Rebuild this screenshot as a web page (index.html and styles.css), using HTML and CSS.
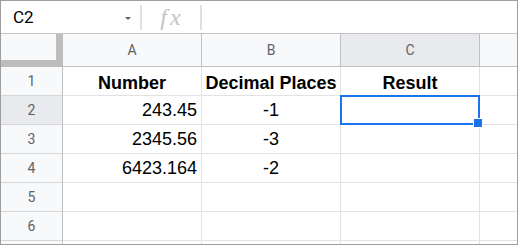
FILE: index.html
```html
<!DOCTYPE html>
<html>
<head>
<meta charset="utf-8">
<link rel="stylesheet" href="styles.css">
</head>
<body>
<div class="frame">
  <div class="formula-bar">
    <div class="name-box">
      <span class="name">C2</span>
      <span class="caret"></span>
    </div>
    <div class="sep"></div>
    <div class="fx">fx</div>
    <div class="sep"></div>
    <div class="formula-input"></div>
  </div>
  <div class="grid">
    <div class="corner"></div>
    <div class="colhead">A</div>
    <div class="colhead">B</div>
    <div class="colhead sel">C</div>
    <div class="colhead last"></div>

    <div class="rowhead">1</div>
    <div class="cell bold center r1">Number</div>
    <div class="cell bold center r1">Decimal Places</div>
    <div class="cell bold center r1">Result</div>
    <div class="cell last"></div>

    <div class="rowhead sel">2</div>
    <div class="cell right">243.45</div>
    <div class="cell center">-1</div>
    <div class="cell active"><div class="selection"></div><div class="handle"></div></div>
    <div class="cell last"></div>

    <div class="rowhead">3</div>
    <div class="cell right">2345.56</div>
    <div class="cell center">-3</div>
    <div class="cell"></div>
    <div class="cell last"></div>

    <div class="rowhead">4</div>
    <div class="cell right">6423.164</div>
    <div class="cell center">-2</div>
    <div class="cell"></div>
    <div class="cell last"></div>

    <div class="rowhead">5</div>
    <div class="cell"></div>
    <div class="cell"></div>
    <div class="cell"></div>
    <div class="cell last"></div>

    <div class="rowhead">6</div>
    <div class="cell"></div>
    <div class="cell"></div>
    <div class="cell"></div>
    <div class="cell last"></div>

    <div class="rowhead partial"></div>
    <div class="cell partial"></div>
    <div class="cell partial"></div>
    <div class="cell partial"></div>
    <div class="cell partial last"></div>
  </div>
</div>
</body>
</html>
```
FILE: styles.css
```css
* { box-sizing: border-box; }
html, body { margin: 0; padding: 0; background: #fff; }
.frame {
  width: 518px;
  height: 245px;
  border: 1px solid #9e9e9e;
  display: flex;
  flex-direction: column;
  overflow: hidden;
}
.formula-bar {
  height: 33px;
  flex: none;
  display: flex;
  align-items: center;
  border-bottom: 1px solid #c4c4c4;
}
.name-box {
  width: 139px;
  height: 32px;
  display: flex;
  align-items: center;
  padding-left: 12px;
}
.name {
  font-family: Roboto, "Liberation Sans", sans-serif;
  font-size: 17px;
  color: #000;
  flex: 1;
}
.caret {
  width: 0;
  height: 0;
  border-left: 3px solid transparent;
  border-right: 3px solid transparent;
  border-top: 3px solid #5f6368;
  margin-right: 9px;
  margin-top: 2px;
}
.sep {
  width: 2px;
  height: 25px;
  background: #e0e0e0;
  flex: none;
}
.fx {
  width: 58px;
  text-align: center;
  font-family: "Liberation Serif", serif;
  font-style: italic;
  font-size: 24px;
  letter-spacing: 3px;
  color: #c4c4c4;
  line-height: 32px;
  padding-left: 2px;
}
.formula-input { flex: 1; }

.grid {
  flex: 1;
  display: grid;
  grid-template-columns: 62px 139px 139px 139px 1fr;
  grid-template-rows: 33px repeat(6, 29px) 1fr;
}
.corner {
  background: #f8f9fa;
  border-right: 7px solid #bdbdbd;
  border-bottom: 7px solid #bdbdbd;
}
.colhead {
  background: #f8f9fa;
  border-right: 1px solid #c0c0c0;
  border-bottom: 1px solid #c0c0c0;
  display: flex;
  align-items: center;
  justify-content: center;
  font-family: Roboto, "Liberation Sans", sans-serif;
  font-size: 14px;
  color: #5f6368;
}
.colhead.sel { background: #e8eaed; }
.colhead.last { border-right: none; }
.rowhead {
  background: #f8f9fa;
  border-right: 1px solid #c0c0c0;
  border-bottom: 1px solid #d6d6d6;
  display: flex;
  align-items: center;
  justify-content: center;
  font-family: Roboto, "Liberation Sans", sans-serif;
  font-size: 14px;
  color: #5f6368;
}
.rowhead.sel { background: #e8eaed; }
.cell {
  border-right: 1px solid #e2e2e2;
  border-bottom: 1px solid #e2e2e2;
  display: flex;
  align-items: center;
  font-family: "Liberation Sans", Arial, sans-serif;
  font-size: 18px;
  color: #000;
  padding: 0 4px;
  white-space: nowrap;
}
.cell.last { border-right: none; }
.partial { border-bottom: none; }
.bold { font-weight: bold; }
.center { justify-content: center; }
.right { justify-content: flex-end; }
.r1 { padding-top: 4px; }
.active { position: relative; }
.selection {
  position: absolute;
  left: -1px;
  top: -1px;
  width: 140px;
  height: 30px;
  border: 2px solid #1a73e8;
}
.handle {
  position: absolute;
  left: 132px;
  top: 22px;
  width: 10px;
  height: 10px;
  background: #1a73e8;
  border: 1px solid #fff;
}
```
